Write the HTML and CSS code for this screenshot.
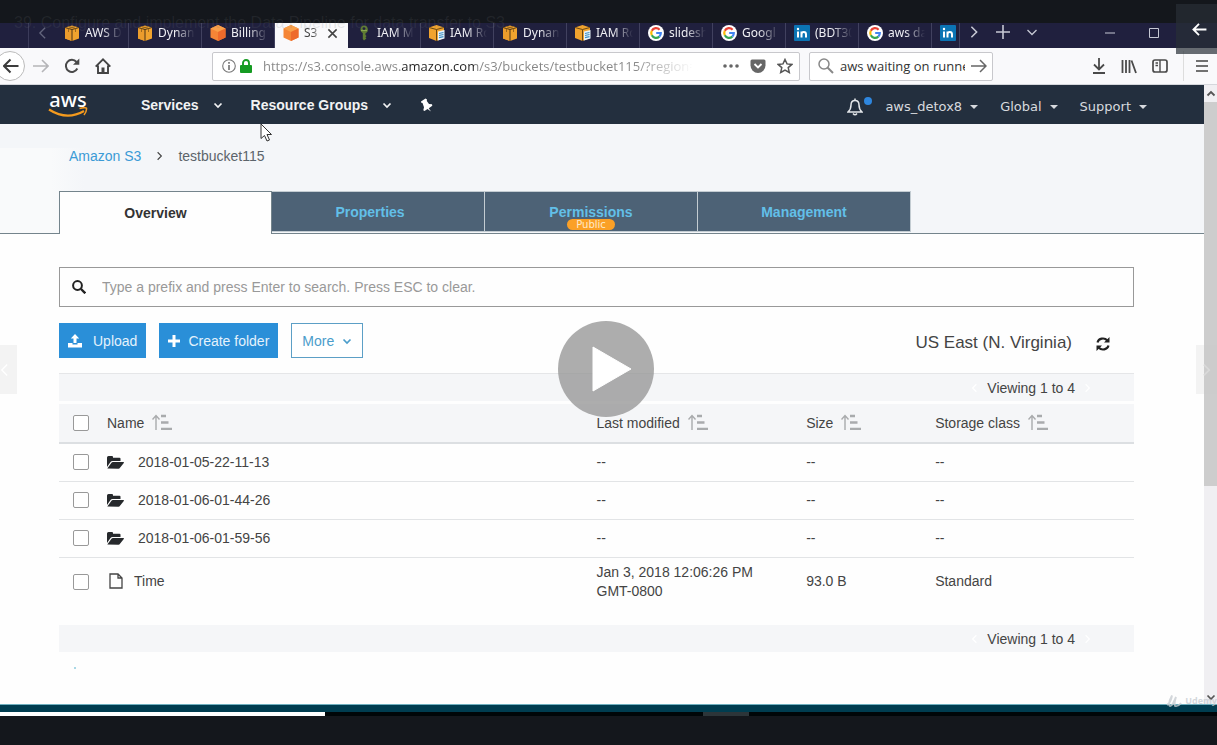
FILE: index.html
```
<!DOCTYPE html>
<html lang="en">
<head>
<meta charset="utf-8">
<meta name="viewport" content="width=device-width, initial-scale=1">
<title>S3 Management Console</title>
<link rel="stylesheet" href="styles.css">
</head>
<body>
<svg class="defs" aria-hidden="true">
  <defs>
    <symbol id="cube" viewBox="0 0 16 16"><path d="M8 .5l7 2v11L8 16l-7-2.500v-11z" fill="#f0a32e"/><path d="M1 2.500l7 2V16l-7-2.500z" fill="#eb9c2c"/><path d="M1 2.500l7 2 7-2M8 4.500V16" fill="none" stroke="#4a3416" stroke-width="1"/><path d="M4.500 1.500l7 2v3.500M11.500 1.500l-7 2v3.500" fill="none" stroke="#8a5c1a" stroke-width=".8"/></symbol>
    <symbol id="hex" viewBox="0 0 16 16"><path d="M8 0l7.500 3.500v9L8 16 .5 12.500v-9z" fill="#f58536"/><path d="M8 0l7.500 3.500L8 7 .5 3.500z" fill="#f9a04a"/><path d="M8 7l7.500-3.500v9L8 16z" fill="#ee6a2b"/></symbol>
    <symbol id="key" viewBox="0 0 16 16"><path d="M8 .5a4 4 0 0 1 1.600 7.600l-.2 1.900 1.200 1-1.200 1.200 1 1.200L8 15.500 6.800 14V8.100A4 4 0 0 1 8 .5z" fill="#5f7c33"/><circle cx="8" cy="3.600" r="1.400" fill="#20203e"/><path d="M5 5.500h6" stroke="#8aa650"/></symbol>
    <symbol id="iam" viewBox="0 0 16 16"><path d="M7.500 0L15 2.500v10.500L7.500 16 0 13V2.500z" fill="#f0a32e"/><path d="M0 2.500l7.500 2 7.500-2M7.500 4.500V16" fill="none" stroke="#6b4812"/><path d="M9 6.500l6.500-1.500v8.500L9 15.500z" fill="#e8f3fa"/><path d="M10 8.500l4.500-1M10 10.500l4.500-1M10 12.700l4.500-1" stroke="#3c8fc4" stroke-width="1.200"/></symbol>
    <symbol id="goog" viewBox="0 0 16 16"><circle cx="8" cy="8" r="8" fill="#fff"/><g fill="none" stroke-width="2.200"><path d="M11.600 4.700A4.800 4.800 0 0 0 3.800 5.800" stroke="#e94235"/><path d="M3.800 5.800a4.800 4.800 0 0 0 0 4.500" stroke="#fbbb05"/><path d="M3.800 10.300a4.800 4.800 0 0 0 7.500 1.300" stroke="#34a753"/><path d="M11.300 11.600A4.800 4.800 0 0 0 12.800 8H8.200" stroke="#4285f3"/></g></symbol>
    <symbol id="linked" viewBox="0 0 16 16"><rect width="16" height="16" rx="1" fill="#0b74b4"/><path d="M4 6.500v6M7.500 12.500v-6M7.500 9.500c0-3.200 4.500-3.200 4.500 0v3" fill="none" stroke="#fff" stroke-width="2"/><circle cx="4" cy="4" r="1.200" fill="#fff"/></symbol>
    <symbol id="down" viewBox="0 0 10 10"><path d="M1.500 3.500L5 7l3.500-3.500" fill="none" stroke="currentColor" stroke-width="1.700"/></symbol>
    <symbol id="right" viewBox="0 0 10 16"><path d="M2 2l6 6-6 6" fill="none" stroke="currentColor" stroke-width="1.800"/></symbol>
    <symbol id="sort" viewBox="0 0 20 16"><path d="M4 16V2M.5 5.500L4 1.500l3.500 4" fill="none" stroke="#a9abad" stroke-width="1.400"/><path d="M9 2h5M9 8.500h7.500M9 15h11" stroke="#a9abad" stroke-width="2.400"/></symbol>
    <symbol id="folder" viewBox="0 0 17 13"><path d="M0 11V1.500Q0 0 1.500 0H5q1 0 1 1v.7h6.500q1 0 1 1V5H5.500Q4.200 5 3.500 6z" fill="#26292c"/><path d="M.3 12.500L4.300 7q.6-.9 1.700-.9h10.500q.8 0 .3.800L13 11.800q-.5.900-1.600.9z" fill="#26292c"/></symbol>
  </defs>
</svg>

<div class="player">
  <header class="lesson">39. Configure and implement the Data Pipeline for data transfer to S3</header>

  <div class="strip">
    <button class="scroll-left" aria-label="Scroll tabs left"><svg viewBox="0 0 10 16"><path d="M8 2L2 8l6 6" fill="none" stroke="currentColor" stroke-width="1.500"/></svg></button>
    <div class="tabs">
      <button class="tab"><svg><use href="#cube"/></svg><span>AWS D</span></button>
      <button class="tab"><svg><use href="#cube"/></svg><span>Dynan</span></button>
      <button class="tab"><svg><use href="#hex"/></svg><span>Billing</span></button>
      <button class="tab active"><svg><use href="#hex"/></svg><span>S3</span><svg class="close" viewBox="0 0 12 12"><path d="M1.500 1.500l9 9m0-9l-9 9" stroke="#444" stroke-width="1.700"/></svg></button>
      <button class="tab"><svg><use href="#key"/></svg><span>IAM M</span></button>
      <button class="tab"><svg><use href="#iam"/></svg><span>IAM Ro</span></button>
      <button class="tab"><svg><use href="#cube"/></svg><span>Dynan</span></button>
      <button class="tab"><svg><use href="#iam"/></svg><span>IAM Ro</span></button>
      <button class="tab"><svg><use href="#goog"/></svg><span>slidesh</span></button>
      <button class="tab"><svg><use href="#goog"/></svg><span>Googl</span></button>
      <button class="tab"><svg><use href="#linked"/></svg><span>(BDT30</span></button>
      <button class="tab"><svg><use href="#goog"/></svg><span>aws da</span></button>
      <button class="tab cut" aria-label="LinkedIn"><svg><use href="#linked"/></svg></button>
    </div>
    <div class="strip-tools">
      <button aria-label="Scroll tabs right"><svg class="i10" viewBox="0 0 10 16"><use href="#right"/></svg></button>
      <button aria-label="New tab"><svg class="i14" viewBox="0 0 14 14"><path d="M7 0v14M0 7h14" stroke="currentColor" stroke-width="1.600"/></svg></button>
      <button aria-label="List tabs"><svg class="i10" viewBox="0 0 10 10"><path d="M.5 3L5 7.500 9.500 3" fill="none" stroke="currentColor" stroke-width="1.300"/></svg></button>
    </div>
    <div class="window-tools">
      <button aria-label="Minimize"><svg class="i10" viewBox="0 0 10 10"><path d="M0 5h10" stroke="currentColor"/></svg></button>
      <button aria-label="Maximize"><svg class="i10" viewBox="0 0 10 10"><path d="M.5.500h9v9h-9z" fill="none" stroke="currentColor"/></svg></button>
    </div>
  </div>

  <div class="toolbar">
    <div class="history">
      <button class="back" aria-label="Back"><svg class="i16" viewBox="0 0 16 16"><path d="M15.500 8H1M7.500 1.500L1 8l6.500 6.500" fill="none" stroke="#3c3c3c" stroke-width="2"/></svg></button>
      <button aria-label="Forward"><svg class="i16" viewBox="0 0 16 16"><path d="M0 8h15M9 2l6 6-6 6" fill="none" stroke="#b5b5b8" stroke-width="1.600"/></svg></button>
      <button aria-label="Reload"><svg class="i16" viewBox="0 0 16 16"><path d="M13.300 10.500A6 6 0 1 1 12.500 4" fill="none" stroke="#4a4a4a" stroke-width="2"/><path d="M15.300.500v6.300H9z" fill="#4a4a4a"/></svg></button>
      <button aria-label="Home"><svg class="i16" viewBox="0 0 16 16"><path d="M.7 8.700L8 1.400l7.300 7.300M3 7.500V15h10V7.500" fill="none" stroke="#444" stroke-width="1.900"/><path d="M6.500 15V9.500h3V15" fill="#444"/></svg></button>
    </div>
    <div class="field url">
      <svg class="i14" viewBox="0 0 14 14"><circle cx="7" cy="7" r="6.300" fill="none" stroke="#777" stroke-width="1.100"/><path d="M7 6v5M7 3v1.700" stroke="#666" stroke-width="1.500"/></svg>
      <svg class="lock" viewBox="0 0 12 14"><path d="M3 7V4a3 3 0 0 1 6 0v3" fill="none" stroke="#159b22" stroke-width="1.900"/><rect y="6" width="12" height="8" rx="1" fill="#159b22"/></svg>
      <input class="url-text" aria-label="Address" value="https://s3.console.aws.amazon.com/s3/buckets/testbucket115/?region=u">
      <button aria-label="Page actions"><svg class="i16" viewBox="0 0 16 16"><g fill="#666"><circle cx="2" cy="8" r="1.800"/><circle cx="8" cy="8" r="1.800"/><circle cx="14" cy="8" r="1.800"/></g></svg></button>
      <button aria-label="Save to Pocket"><svg class="i16" viewBox="0 0 16 16"><path d="M2 1.500h12q1.500 0 1.500 1.500v4.500a7.500 7.500 0 0 1-15 0V3Q.5 1.500 2 1.500z" fill="#666"/><path d="M4.500 6L8 9.500 11.500 6" fill="none" stroke="#fff" stroke-width="1.900"/></svg></button>
      <button aria-label="Bookmark"><svg class="i16" viewBox="0 0 16 16"><path d="M8 1.500l2 4.400 4.900.5-3.700 3.200 1.100 4.800L8 12l-4.300 2.400 1.100-4.800L1.100 6.400 6 5.900z" fill="none" stroke="#555" stroke-width="1.500"/></svg></button>
    </div>
    <div class="field find">
      <svg class="i16" viewBox="0 0 16 16"><circle cx="6" cy="6" r="5" fill="none" stroke="#888" stroke-width="1.500"/><path d="M9.500 9.500L15 15" stroke="#888" stroke-width="2"/></svg>
      <input aria-label="Search" value="aws waiting on runne">
      <button aria-label="Go"><svg class="i16" viewBox="0 0 16 16"><path d="M0 8h15M9 2l6 6-6 6" fill="none" stroke="#666" stroke-width="1.500"/></svg></button>
    </div>
    <div class="extras">
      <button aria-label="Downloads"><svg class="i16" viewBox="0 0 14 16"><path d="M7 0v11M2 6.500l5 5 5-5M1 15h12" fill="none" stroke="#4a4a4a" stroke-width="1.800"/></svg></button>
      <button aria-label="Library"><svg class="i16" viewBox="0 0 16 16"><path d="M1.500 2v13M5 2v13M8.500 2v13M10.500 2.500L15 15" stroke="#4a4a4a" stroke-width="1.800"/></svg></button>
      <button aria-label="Sidebars"><svg class="i16" viewBox="0 0 16 16"><rect x="1" y="2" width="14" height="12" rx="2" fill="none" stroke="#4a4a4a" stroke-width="1.700"/><path d="M8 2v12M3.500 5H6M3.500 7.500H6" stroke="#4a4a4a" stroke-width="1.400"/></svg></button>
      <button class="menu" aria-label="Menu"><svg class="i14" viewBox="0 0 14 14"><path d="M1 2h12M1 7h12M1 12h12" stroke="#444" stroke-width="1.700"/></svg></button>
    </div>
  </div>

  <div class="viewport">
    <div class="page">
      <nav class="aws">
        <a class="logo" href="#" aria-label="AWS"><span>aws</span><svg viewBox="0 0 40 11"><path d="M1 2.500Q19 14 36 4" fill="none" stroke="#f49a1e" stroke-width="2.200"/><path d="M31.500 1.500Q37 0 38.500 1.200 39 4 36 8" fill="none" stroke="#f49a1e" stroke-width="1.500"/></svg></a>
        <button class="main-item">Services <svg class="i10"><use href="#down"/></svg></button>
        <button class="main-item">Resource Groups <svg class="i10"><use href="#down"/></svg></button>
        <button class="pin" aria-label="Pin"><svg class="i14" viewBox="0 0 14 14"><path d="M1 3.500L5.500.500 7 1.500 6.800 3 9 6l3 .3.300 1.500-3.500 2.400 2.200 3.300-3.500-2.500L4.500 13l-1.200-.8.700-3L2.500 5 1 4.500z" fill="#fff"/></svg></button>
        <div class="account">
          <button class="bell" aria-label="Notifications"><svg viewBox="0 0 16 18"><path d="M1 14h14q-3-2.500-3-7 0-4.500-4-4.500T4 7q0 4.500-3 7z" fill="none" stroke="#e4e7ea" stroke-width="1.500"/><path d="M8 .5v2M6 15.500q2 2.500 4 0" stroke="#e4e7ea" stroke-width="1.500" fill="none"/></svg><i></i></button>
          <button class="caret">aws_detox8</button>
          <button class="caret">Global</button>
          <button class="caret">Support</button>
        </div>
      </nav>

      <header class="bucket">
        <div class="crumbs"><a href="#">Amazon S3</a><svg viewBox="0 0 10 16"><use href="#right"/></svg><span>testbucket115</span></div>
        <div class="sections">
          <button class="section on">Overview</button>
          <button class="section wide">Properties</button>
          <button class="section">Permissions<em>Public</em></button>
          <button class="section">Management</button>
        </div>
      </header>

      <main class="content">
        <label class="prefix">
          <svg class="i14" viewBox="0 0 14 14"><circle cx="5.500" cy="5.500" r="4.400" fill="none" stroke="#222" stroke-width="2"/><path d="M9 9l4.300 4.300" stroke="#222" stroke-width="2.400"/></svg>
          <input aria-label="Search prefix" placeholder="Type a prefix and press Enter to search. Press ESC to clear.">
        </label>
        <div class="actions">
          <button class="btn upload"><svg class="i14" viewBox="0 0 14 14"><path d="M7 0l4.200 4.500H8.500V9h-3V4.500H2.800z" fill="#fff"/><path d="M0 9h4.500v1.500h5V9H14v4.500H0z" fill="#fff"/></svg>Upload</button>
          <button class="btn"><svg class="i12" viewBox="0 0 12 12"><path d="M6 0v12M0 6h12" stroke="#fff" stroke-width="3"/></svg>Create folder</button>
          <button class="btn more">More<svg class="i10"><use href="#down"/></svg></button>
          <span class="region">US East (N. Virginia)</span>
          <button class="refresh" aria-label="Refresh"><svg class="i14" viewBox="0 0 14 14"><path d="M1.500 5.500A5.500 5 0 0 1 11.300 3.500M12.500 8.500A5.500 5 0 0 1 2.700 10.500" fill="none" stroke="#222" stroke-width="2.100"/><path d="M13.500 0v5.500H8zM.5 14V8.500H6z" fill="#222"/></svg></button>
        </div>
        <div class="pager top"><svg viewBox="0 0 10 16"><path d="M8 2L2 8l6 6" fill="none" stroke="currentColor" stroke-width="2"/></svg>Viewing 1 to 4<svg viewBox="0 0 10 16"><use href="#right"/></svg></div>
        <table class="objects">
          <thead>
            <tr>
              <th class="pick"><input type="checkbox" aria-label="Select all"></th>
              <th>Name<svg class="sort"><use href="#sort"/></svg></th>
              <th class="modified">Last modified<svg class="sort"><use href="#sort"/></svg></th>
              <th class="size">Size<svg class="sort"><use href="#sort"/></svg></th>
              <th class="class">Storage class<svg class="sort"><use href="#sort"/></svg></th>
            </tr>
          </thead>
          <tbody>
            <tr><td class="pick"><input type="checkbox" aria-label="Select 2018-01-05-22-11-13"></td><td><svg class="folder"><use href="#folder"/></svg>2018-01-05-22-11-13</td><td>--</td><td>--</td><td>--</td></tr>
            <tr><td class="pick"><input type="checkbox" aria-label="Select 2018-01-06-01-44-26"></td><td><svg class="folder"><use href="#folder"/></svg>2018-01-06-01-44-26</td><td>--</td><td>--</td><td>--</td></tr>
            <tr><td class="pick"><input type="checkbox" aria-label="Select 2018-01-06-01-59-56"></td><td><svg class="folder"><use href="#folder"/></svg>2018-01-06-01-59-56</td><td>--</td><td>--</td><td>--</td></tr>
            <tr class="file"><td class="pick"><input type="checkbox" aria-label="Select Time"></td><td><svg class="doc" viewBox="0 0 14 16"><path d="M1 1h8l4 4v10H1zM9 1v4h4" fill="none" stroke="#444" stroke-width="1.300"/></svg>Time</td><td>Jan 3, 2018 12:06:26 PM<br>GMT-0800</td><td>93.0 B</td><td>Standard</td></tr>
          </tbody>
        </table>
        <div class="pager"><svg viewBox="0 0 10 16"><path d="M8 2L2 8l6 6" fill="none" stroke="currentColor" stroke-width="2"/></svg>Viewing 1 to 4<svg viewBox="0 0 10 16"><use href="#right"/></svg></div>
        <div class="speck"></div>
      </main>
    </div>
    <div class="scrollbar">
      <svg class="i10" viewBox="0 0 10 10"><path d="M1.500 6.500L5 3l3.500 3.500" fill="none" stroke="currentColor" stroke-width="1.800"/></svg>
      <div class="track"><div class="thumb"></div></div>
      <svg class="i10"><use href="#down"/></svg>
    </div>
  </div>

  <div class="edge"></div>
  <div class="progress"><div class="played"></div><div class="chapter"></div></div>
  <footer class="controls"></footer>

  <svg class="pointer" viewBox="0 0 13 19"><path d="M1 1v14.500l3.500-3 2.500 5.500 2.500-1-2.500-5.500H11.500z" fill="#fff" stroke="#333"/></svg>
  <div class="watermark"><svg viewBox="0 0 16 14"><path d="M1 11Q5 8 6 1.500q-3 5-3 9 1 3.500 4-1L10 3q-2 6-1 9 3 1 6-3" fill="none" stroke="currentColor" stroke-width="1.800"/></svg>Udemy</div>
  <button class="exit" aria-label="Go back"><svg viewBox="0 0 16 14"><path d="M16 7H2M8 1L2 7l6 6" fill="none" stroke="#fff" stroke-width="2"/></svg></button>
  <button class="step prev" aria-label="Previous lesson"><svg viewBox="0 0 10 16"><path d="M8 2L2 8l6 6" fill="none" stroke="currentColor" stroke-width="1.500"/></svg></button>
  <button class="step next" aria-label="Next lesson"><svg viewBox="0 0 10 16"><use href="#right"/></svg></button>
  <button class="play" aria-label="Play"><svg viewBox="0 0 40 46"><path d="M1 1l38 22L1 45z" fill="#fff" stroke="#fff" stroke-linejoin="round"/></svg></button>
</div>
</body>
</html>
```
FILE: styles.css
```
* { box-sizing: border-box; }
body { margin: 0; background: #14171c; font: 14px/20px "Liberation Sans", Arial, sans-serif; color: #444; }
button { border: 0; padding: 0; margin: 0; background: none; font: inherit; color: inherit; display: flex; align-items: center; }
input { font: inherit; color: inherit; border: 0; outline: 0; background: none; padding: 0; margin: 0; min-width: 0; }
a { color: #3b9bd6; text-decoration: none; }
svg { flex: none; display: block; }
.defs { position: absolute; width: 0; height: 0; }
.i10 { width: 10px; height: 10px; }
.i12 { width: 12px; height: 12px; }
.i14 { width: 14px; height: 14px; }
.i16 { width: 16px; height: 16px; }

.player { position: relative; min-height: 100vh; display: flex; flex-direction: column; overflow: hidden; }
.lesson { position: relative; z-index: 1; height: 23px; padding: 12px 14px 0; font-size: 16px; line-height: 22px; color: rgba(110, 115, 120, .16); white-space: nowrap; }

.strip { display: flex; height: 25px; background: #20203e; color: #c6c8d4; font: 12px/16px "Noto Sans", sans-serif; }
.scroll-left { margin-left: 28px; width: 28px; padding-bottom: 5px; border-left: 1px solid #3b3b5a; justify-content: center; color: #64667e; }
.scroll-left svg { width: 9px; height: 14px; }
.tabs { display: flex; flex: 0 1 905px; min-width: 0; overflow: hidden; }
.tab { flex: 0 1 73px; min-width: 0; padding: 0 6px 5px 8px; gap: 5px; border-right: 1px solid #41415f; color: #f0f0f5; }
.tab svg { width: 16px; height: 16px; }
.tab span { flex: 1; overflow: hidden; white-space: nowrap; text-align: left; -webkit-mask-image: linear-gradient(90deg, #000 45%, transparent); mask-image: linear-gradient(90deg, #000 45%, transparent); }
.tab.active { background: #f9f9fb; color: #444; border: 0; }
.tab .close { width: 11px; height: 11px; margin-right: 4px; }
.tab.cut { flex: 0 0 28px; }
.strip-tools { display: flex; gap: 17px; margin-left: 8px; padding-bottom: 8px; }
.strip-tools .i10 { height: 14px; }
.window-tools { display: flex; gap: 34px; margin-left: auto; padding: 0 58px 5px 0; }

.toolbar { display: flex; align-items: center; height: 37px; background: #f9f9fb; border-bottom: 1px solid #d5d7dc; font: 13px/18px "Open Sans", sans-serif; }
.history { display: flex; align-items: center; gap: 15px; flex: 0 0 212px; }
.back { width: 30px; height: 30px; margin: 0 -7px 0 -5px; padding-left: 7px; border: 1px solid #bbb; border-radius: 50%; background: #fff; }
.field { display: flex; align-items: center; min-width: 0; height: 29px; background: #fff; border: 1px solid #c8c8cc; border-radius: 2px; }
.field input { flex: 1; width: 0; }
.url { flex: 0 1 588px; padding: 0 6px 0 9px; gap: 11px; }
.lock { width: 12px; height: 14px; margin-left: -7px; }
.url-text { margin-right: 20px; color: transparent; background: linear-gradient(90deg, #858585 138px, #222 138px 211px, #858585 211px 370px, transparent 430px); -webkit-background-clip: text; background-clip: text; }
.find { flex: 0 1 184px; margin-left: 9px; padding: 0 5px 0 8px; gap: 6px; color: #333; }
.extras { display: flex; align-items: center; gap: 15px; margin-left: auto; }
.extras button:first-child { margin-right: -1px; }
.menu { height: 30px; border-left: 1px solid #ddd; padding: 0 8px 0 11px; }

.viewport { flex: 1; display: flex; background: #fefefe; }
.page { flex: 1; min-width: 0; }
.aws { display: flex; align-items: center; height: 39px; padding: 0 57px 0 48px; background: #232f3e; color: #f2f3f4; }
.logo { width: 40px; margin-right: 53px; color: #fff; font: 500 20px/15px "Noto Sans", sans-serif; text-align: center; }
.logo svg { width: 40px; height: 11px; }
.main-item { gap: 14px; margin-right: 28px; font-weight: bold; font-size: 14px; white-space: nowrap; }
.account { display: flex; align-items: center; gap: 22px; margin-left: auto; padding-top: 4px; font: 13px/18px "DejaVu Sans", sans-serif; color: #d7dade; }
.bell { position: relative; }
.bell svg { width: 16px; height: 18px; }
.bell i { position: absolute; right: -9px; top: -1px; width: 8px; height: 8px; border-radius: 50%; background: #2e86de; }
.caret { gap: 8px; }
.caret::after { content: ""; border: 4px solid transparent; border-top-color: currentColor; border-bottom: 0; }

.bucket { padding: 22px 0 0 59px; background: linear-gradient(90deg, #f9fafb 60%, #f4f6f9) no-repeat 0 24px / 84px 100% #f4f6f9; border-bottom: 1px solid #74848c; }
.crumbs { display: flex; align-items: center; gap: 15px; padding-left: 10px; color: #5c646b; }
.crumbs svg { width: 7px; height: 10px; color: #444; }
.sections { display: flex; margin-top: 25px; }
.section { flex: 0 1 213px; height: 41px; flex-direction: column; justify-content: center; background: #4d6276; color: #62bfe8; border: 1px solid #c3ccd2; border-left: 0; font-weight: bold; font-size: 14px; position: relative; }
.section.on { height: 43px; padding-right: 20px; margin-bottom: -1px; background: #fefefe; color: #333; border: 1px solid #74848c; border-bottom: 0; }
.section.wide { padding-right: 16px; }
.section em { position: absolute; bottom: 1px; left: 50%; margin-left: -24px; width: 48px; border-radius: 6px; background: #fba026; color: #ffeac6; font: 10px/11px "DejaVu Sans", sans-serif; text-align: center; }

.content { padding: 33px 70px 0 59px; }
.prefix { display: flex; align-items: center; height: 40px; padding: 0 12px; gap: 16px; border: 1px solid #999; }
.prefix input { flex: 1; }
.prefix input::placeholder { color: #999; opacity: 1; }
.actions { display: flex; align-items: center; margin: 16px 0 15px; }
.btn { height: 35px; padding: 0 9px; gap: 8px; margin-right: 13px; background: #2a8fd8; color: #e4f2fc; }
.upload { gap: 11px; }
.more { padding: 0 10px; background: #fff; color: #4b9dcb; border: 1px solid #5c9fc6; }
.region { margin-left: auto; padding-top: 4px; font-size: 17px; }
.refresh { margin: 6px 24px 0; }
.pager { display: flex; align-items: center; justify-content: flex-end; gap: 9px; padding: 4px 43px 3px 0; background: #f5f6f8; line-height: 20px; }
.pager svg { width: 7px; height: 10px; color: #fff; }
.pager.top { height: 28px; border-top: 1px solid #e5e6e8; margin-bottom: 3px; }
.objects { width: 100%; margin-bottom: 19px; table-layout: fixed; border-collapse: collapse; }
.objects th { height: 39px; padding: 0; background: #f5f6f8; border-bottom: 2px solid #dcdfe2; font-weight: normal; text-align: left; white-space: nowrap; }
.objects td { height: 38px; padding: 0; border-bottom: 1px solid #e2e4e6; line-height: 19px; }
.objects .file td { height: 49px; border: 0; }
.objects .pick { width: 48px; }
.modified { width: 19.5%; }
.size { width: 12%; }
.class { width: 18.5%; }
.pick input { appearance: none; display: block; width: 16px; height: 16px; margin-left: 14px; border: 1px solid #999; border-radius: 2px; background: #fff; }
.sort { display: inline-block; width: 20px; height: 16px; margin-left: 8px; vertical-align: -2px; }
.folder { display: inline-block; width: 17px; height: 13px; margin-right: 14px; vertical-align: -2px; }
.doc { display: inline-block; width: 14px; height: 16px; margin: 0 11px 0 2px; vertical-align: -3px; }
.speck { width: 2px; height: 2px; margin: 15px 0 0 15px; background: #a9d8e6; }

.scrollbar { width: 13px; display: flex; flex-direction: column; align-items: center; padding: 4px 0 2px; background: #f0eff2; color: #555; }
.track { flex: 1; width: 100%; padding-top: 3px; }
.thumb { height: 65%; background: #cdcdcd; }

.edge { height: 8px; background: #003d50; border-top: 1px solid #6eafbe; }
.progress { position: relative; height: 4px; background: #000608; }
.played { width: 26.7%; height: 100%; background: #fff; }
.chapter { position: absolute; top: 0; left: 57.8%; width: 46px; height: 4px; background: #2c3539; }
.controls { height: 29px; }

.pointer { position: absolute; left: 260px; top: 123px; width: 13px; height: 19px; }
.watermark { position: absolute; right: 0; top: 694px; display: flex; align-items: center; gap: 3px; font: bold 9px/14px "Open Sans", sans-serif; color: rgba(200, 205, 210, .8); }
.watermark svg { width: 16px; height: 14px; }
.exit { position: absolute; z-index: 2; right: 0; top: 4px; width: 41px; height: 50px; justify-content: center; padding-left: 5px; background: rgba(40, 47, 54, .7); }
.exit svg { width: 16px; height: 13px; }
.step { position: absolute; top: 345px; height: 49px; justify-content: center; background: rgba(200, 200, 200, .2); color: #fff; }
.step svg { width: 9px; height: 16px; }
.prev { left: 0; width: 17px; }
.prev svg { margin-left: -8px; }
.next { right: 0; width: 21px; color: #d9d9d9; }
.play { position: absolute; left: 50%; top: 321px; margin-left: -51px; width: 96px; height: 96px; padding-left: 12px; justify-content: center; border-radius: 50%; background: rgba(150, 150, 150, .78); }
.play svg { width: 40px; height: 46px; }
```
